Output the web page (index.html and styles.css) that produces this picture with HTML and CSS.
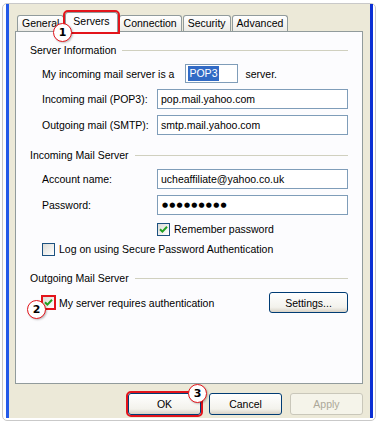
FILE: index.html
```html
<!DOCTYPE html>
<html lang="en">
<head>
  <meta charset="UTF-8" />
  <title>Account Properties - Servers</title>
  <link rel="stylesheet" href="styles.css">
</head>
<body>
  <div class="shot">
    <div class="window">
      <div class="tabs">
        <div class="tab">General</div>
        <div class="tab tab-active">Servers</div>
        <div class="tab">Connection</div>
        <div class="tab">Security</div>
        <div class="tab">Advanced</div>
      </div>

      <div class="panel">
        <div class="group-title">Server Information</div>
        <div class="group-body">
          <div class="row row-first">
            <span class="label label-auto">My incoming mail server is a</span>
            <span class="field field-short"><span class="selected">POP3</span></span>
            <span class="after">server.</span>
          </div>
          <div class="row">
            <span class="label">Incoming mail (POP3):</span>
            <span class="field">pop.mail.yahoo.com</span>
          </div>
          <div class="row">
            <span class="label">Outgoing mail (SMTP):</span>
            <span class="field">smtp.mail.yahoo.com</span>
          </div>
        </div>

        <div class="group-title group-next">Incoming Mail Server</div>
        <div class="group-body">
          <div class="row row-first">
            <span class="label">Account name:</span>
            <span class="field">ucheaffiliate@yahoo.co.uk</span>
          </div>
          <div class="row">
            <span class="label">Password:</span>
            <span class="field field-pass">●●●●●●●●●</span>
          </div>
          <div class="check-row check-indent">
            <span class="box">
              <svg viewBox="0 0 11 11" width="11" height="11"><path d="M2 5.2 L4.4 7.6 L9 2.8" fill="none" stroke="#21a121" stroke-width="2"/></svg>
            </span>
            <span>Remember password</span>
          </div>
          <div class="check-row check-next">
            <span class="box"></span>
            <span>Log on using Secure Password Authentication</span>
          </div>
        </div>

        <div class="group-title group-last">Outgoing Mail Server</div>
        <div class="group-body">
          <div class="auth-row">
            <span class="box box-mark">
              <svg viewBox="0 0 11 11" width="11" height="11"><path d="M2 5.2 L4.4 7.6 L9 2.8" fill="none" stroke="#21a121" stroke-width="2"/></svg>
            </span>
            <span class="auth-text">My server requires authentication</span>
            <button class="btn btn-settings">Settings...</button>
          </div>
        </div>
      </div>

      <div class="actions">
        <button class="btn btn-mark">OK</button>
        <button class="btn">Cancel</button>
        <button class="btn btn-disabled">Apply</button>
      </div>

      <span class="badge badge-1">1</span>
      <span class="badge badge-2">2</span>
      <span class="badge badge-3">3</span>
    </div>
  </div>
</body>
</html>
```

FILE: styles.css
```css
body {
  margin: 0;
  background: #ffffff;
  font-family: "Liberation Sans", Arial, sans-serif;
  font-size: 10.5px;
  color: #000000;
}

.shot {
  box-sizing: border-box;
  height: 418px;
  margin: 3px 2px 0;
  border: 1px solid #c9c9c9;
  border-radius: 5px;
  padding: 0 2px 2px 3px;
  display: flex;
}

.window {
  flex: 1;
  position: relative;
  background: #ece9d8;
  border-left: 3px solid #245ae8;
  border-right: 3px solid #0b2fd4;
  padding: 8px 7px 0 6px;
}

/* tabs */
.tabs {
  display: flex;
  align-items: flex-end;
  height: 19px;
  padding-left: 2px;
}

.tab {
  box-sizing: border-box;
  height: 16px;
  padding: 0 4px;
  line-height: 15px;
  border: 1px solid #919b9c;
  border-bottom: 0;
  border-radius: 3px 3px 0 0;
  background: linear-gradient(#ffffff, #ecebe6);
  margin-right: 1px;
}

.tab-active {
  height: 20px;
  margin-bottom: -1px;
  padding: 0 7px;
  line-height: 16px;
  background: #fcfcfe;
  position: relative;
  z-index: 1;
  outline: 2px solid #e3141b;
}

.panel {
  box-sizing: border-box;
  height: 353px;
  border: 1px solid #919b9c;
  background: #fcfcfe;
  padding: 12px 14px 0;
}

.group-title {
  display: flex;
  align-items: center;
  height: 13px;
  line-height: 13px;
}

.group-title::after {
  content: "";
  flex: 1;
  border-top: 1px solid #d0d0bf;
  margin-left: 6px;
}

.group-next {
  margin-top: 14px;
}

.group-last {
  margin-top: 16px;
}

.group-body {
  padding-left: 12px;
}

.row {
  display: flex;
  align-items: center;
  margin-top: 6px;
}

.row-first {
  margin-top: 7px;
}

.label {
  flex: none;
  width: 115px;
}

.label-auto {
  width: auto;
  margin-right: 11px;
}

.field {
  box-sizing: border-box;
  flex: 1;
  height: 20px;
  line-height: 18px;
  padding: 0 3px;
  border: 1px solid #7f9db9;
  background: #ffffff;
  white-space: nowrap;
}

.field-short {
  flex: none;
  width: 53px;
  height: 19px;
  line-height: 15px;
  padding: 1px 2px;
}

.selected {
  display: inline-block;
  background: #316ac5;
  color: #ffffff;
  padding: 0 2px 0 1px;
}

.after {
  margin-left: 7px;
}

.field-pass {
  font-family: "DejaVu Sans", sans-serif;
  font-size: 7px;
  letter-spacing: 1.2px;
  padding-left: 4px;
}

.check-row {
  display: flex;
  align-items: center;
  gap: 4px;
  height: 13px;
  line-height: 13px;
}

.check-indent {
  margin-top: 8px;
  padding-left: 115px;
}

.check-next {
  margin-top: 7px;
}

.box {
  box-sizing: border-box;
  flex: none;
  width: 13px;
  height: 13px;
  border: 1px solid #1c5180;
  background: linear-gradient(135deg, #dcdcd7, #ffffff);
  display: flex;
  align-items: center;
  justify-content: center;
}

.box-mark {
  border-color: #e3141b;
  outline: 1px solid #e3141b;
}

.auth-row {
  display: flex;
  align-items: center;
  margin-top: 7px;
}

.auth-text {
  margin-left: 4px;
}

.btn {
  box-sizing: border-box;
  width: 73px;
  height: 22px;
  padding: 0;
  font-family: inherit;
  font-size: inherit;
  color: #000000;
  border: 1px solid #003c74;
  border-radius: 3px;
  background: linear-gradient(#ffffff, #f3f2ec 75%, #d8d2c6);
}

.btn-settings {
  margin-left: auto;
  width: 79px;
  height: 21px;
}

.btn-mark {
  outline: 2px solid #e3141b;
}

.btn-disabled {
  color: #aca899;
  border-color: #c9c7ba;
  background: #f5f4ea;
}

.actions {
  display: flex;
  justify-content: flex-end;
  gap: 8px;
  margin-top: 9px;
}

/* numbered callouts */
.badge {
  position: absolute;
  z-index: 2;
  box-sizing: border-box;
  width: 19px;
  height: 19px;
  border: 1.5px solid #e3141b;
  border-radius: 50%;
  background: #ffffff;
  box-shadow: 1px 1px 2px rgba(0, 0, 0, 0.25);
  display: flex;
  align-items: center;
  justify-content: center;
  font: bold 11px "DejaVu Sans", sans-serif;
}

.badge-1 {
  left: 44px;
  top: 19px;
}

.badge-2 {
  left: 18px;
  top: 296px;
}

.badge-3 {
  left: 179px;
  top: 380px;
}
```
